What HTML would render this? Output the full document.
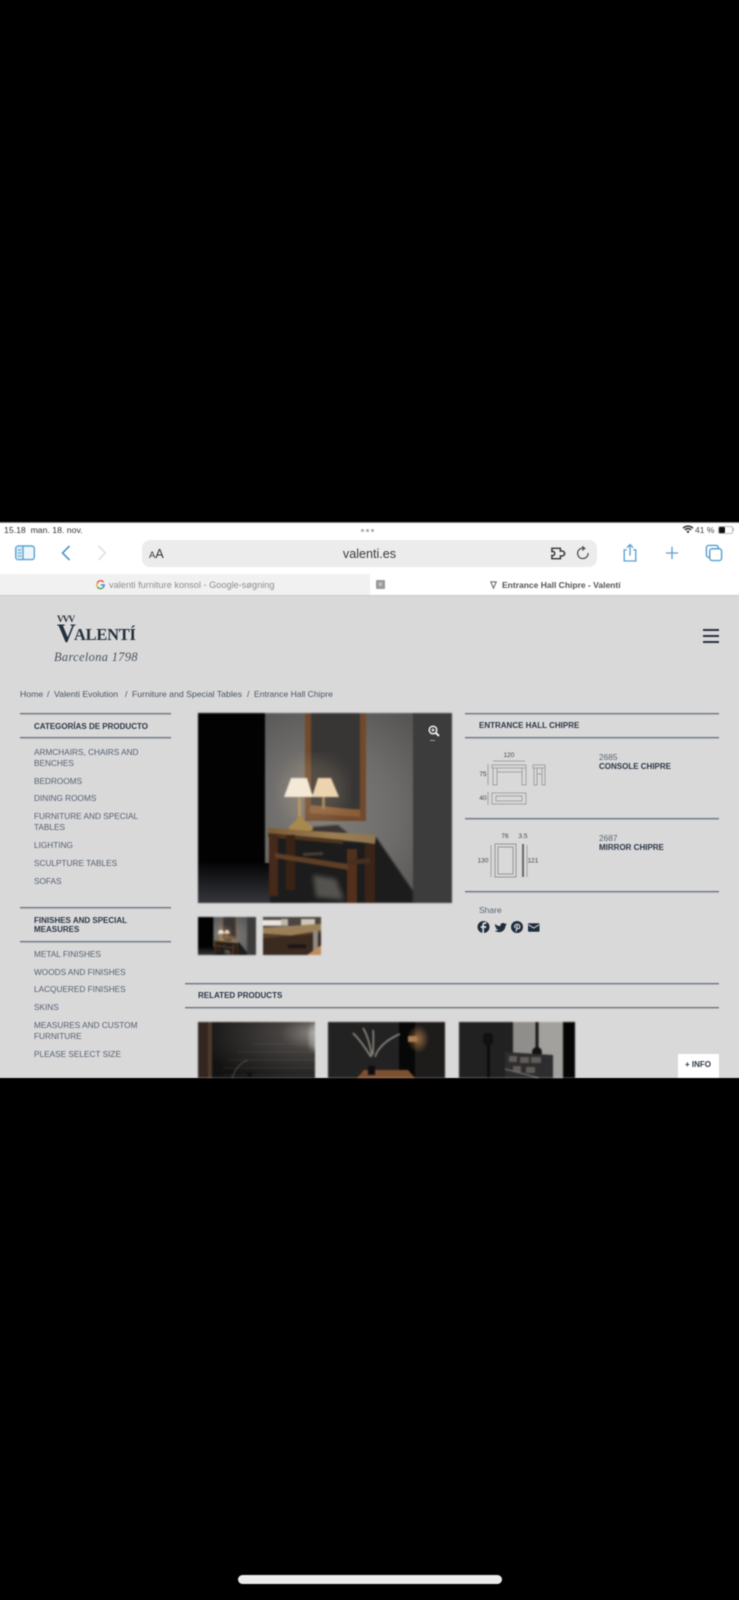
<!DOCTYPE html>
<html lang="en">
<head>
<meta charset="utf-8">
<title>Entrance Hall Chipre - Valentí</title>
<style>
html,body{margin:0;padding:0;background:#000;}
body{width:739px;height:1600px;position:relative;overflow:hidden;font-family:"Liberation Sans",sans-serif;}
.a{position:absolute;}
.t{position:absolute;white-space:nowrap;line-height:12px;height:12px;}
#wrap{position:absolute;left:0;top:0;width:739px;height:1600px;filter:blur(.45px);}
.r{position:absolute;height:1px;background:#626b78;box-shadow:0 1px 0 #b4b8bd;}
.n{font-size:8.25px;color:#556070;left:34px;}
.h{font-size:8px;font-weight:bold;color:#2c3746;}
.bc{font-size:8.7px;color:#4b5563;top:688px;}
svg{position:absolute;overflow:visible;}
.ph{filter:blur(.7px);overflow:hidden;}
</style>
</head>
<body>
<div id="wrap">
<svg width="0" height="0" style="position:absolute">
<defs>
<filter id="b1"><feGaussianBlur stdDeviation="0.7"/></filter>
<filter id="b2"><feGaussianBlur stdDeviation="2.5"/></filter>
<filter id="b3"><feGaussianBlur stdDeviation="8"/></filter>
<radialGradient id="wall" gradientUnits="userSpaceOnUse" cx="130" cy="100" r="125">
<stop offset="0" stop-color="#7f7d7a"/><stop offset=".55" stop-color="#6e6c6a"/><stop offset="1" stop-color="#565553"/>
</radialGradient>
<linearGradient id="floor" x1="0" y1="0" x2="0" y2="1">
<stop offset="0" stop-color="#050506"/><stop offset="1" stop-color="#35373c"/>
</linearGradient>
<linearGradient id="top" x1="0" y1="0" x2="1" y2="0">
<stop offset="0" stop-color="#7a5a34"/><stop offset=".6" stop-color="#9c7e52"/><stop offset="1" stop-color="#8f7450"/>
</linearGradient>
<radialGradient id="brick" cx="1" cy="0.2" r="1">
<stop offset="0" stop-color="#8b8784"/><stop offset=".3" stop-color="#454240"/><stop offset="1" stop-color="#131212"/>
</radialGradient>
<radialGradient id="glow" cx=".5" cy=".5" r=".5">
<stop offset="0" stop-color="#c98c52"/><stop offset="1" stop-color="#c98c52" stop-opacity="0"/>
</radialGradient>
<symbol id="room" viewBox="0 0 254 190" preserveAspectRatio="none">
<rect width="254" height="190" fill="#020202"/>
<rect x="67" width="187" height="190" fill="url(#wall)"/>
<rect x="215" width="39" height="190" fill="#3d3c3c"/>
<rect x="0" y="150" width="110" height="40" fill="url(#floor)"/>
<rect x="0" y="0" width="66" height="150" fill="#020202"/>
<polygon points="178,124 215,178 215,190 150,190 160,128" fill="#1d1c1c" filter="url(#b1)"/>
<polygon points="72,122 177,130 177,190 72,190" fill="#1f1e1e" filter="url(#b1)"/>
<rect x="107" y="0" width="61" height="108" fill="#714a2e"/>
<rect x="113" y="0" width="49" height="96" fill="#383635"/>
<polygon points="113,92 162,97 162,104 111,100" fill="#8a5e38"/>
<ellipse cx="115" cy="78" rx="32" ry="32" fill="#e8c9a0" opacity=".16" filter="url(#b3)"/>
<polygon points="102,115 140,112 150,120 120,125" fill="#3a3431" filter="url(#b1)"/>
<polygon points="86,84 115,84 109,65 93,65" fill="#f4e9d6"/>
<polygon points="114,84 141,84 133,65 120,65" fill="#eed4ae"/>
<rect x="124" y="84" width="3" height="12" fill="#a88a5c"/>
<rect x="100" y="85" width="3" height="22" fill="#b8975f"/>
<path d="M100 103 C99 110 91 111 91 115 C91 119 96 118 102 118 C110 118 115 119 115 115 C115 111 105 110 104 103Z" fill="#a8894d"/>
<polygon points="70,115 178,122 177,131 145,127 70,120" fill="url(#top)"/>
<polygon points="70,120 145,127 145,131 70,124" fill="#4e341d"/>
<rect x="71" y="121" width="9" height="62" fill="#45291a"/>
<rect x="88" y="122" width="9" height="55" fill="#3a2214"/>
<rect x="149" y="136" width="10" height="54" fill="#52301c"/>
<rect x="167" y="131" width="10" height="59" fill="#3b2417"/>
<polygon points="77,140 150,151 150,157 77,145" fill="#5f3e25"/>
<polygon points="150,147 172,145 172,150 150,152" fill="#45301f"/>
<polygon points="105,140 125,139 125,142 105,143" fill="#4a3c30"/>
<polygon points="115,162 138,166 146,187 118,184" fill="#55534f" filter="url(#b2)"/>
</symbol>
</defs>
</svg>

<!-- Browser chrome -->
<div class="a" style="left:-4px;top:522px;width:747px;height:1px;background:#888;"></div>
<div class="a" style="left:-4px;top:523px;width:747px;height:51px;background:#fff;"></div>
<div class="t" style="left:4px;top:524px;font-size:8.7px;color:#333;">15.18&nbsp; man. 18. nov.</div>
<div class="a" style="left:361px;top:529px;width:3px;height:3px;border-radius:50%;background:#aaa;box-shadow:5px 0 #aaa,10px 0 #aaa;"></div>
<svg style="left:682px;top:525px" width="12" height="9" viewBox="0 0 12 9"><path d="M1 3.2C4 .4 8 .4 11 3.2M2.8 5C4.8 3.2 7.2 3.2 9.2 5" fill="none" stroke="#333" stroke-width="1.5"/><path d="M4.4 6.4 6 8.4 7.6 6.4C6.6 5.6 5.4 5.6 4.4 6.4Z" fill="#333"/></svg>
<div class="t" style="left:695px;top:524px;font-size:8.5px;color:#444;">41 %</div>
<div class="a" style="left:718px;top:526px;width:13px;height:6px;border:1px solid #bbb;border-radius:2px;"></div>
<div class="a" style="left:719px;top:527px;width:6px;height:6px;background:#111;border-radius:1px;"></div>
<div class="a" style="left:733px;top:528px;width:1px;height:3px;background:#bbb;"></div>

<svg style="left:14px;top:544px" width="22" height="18" viewBox="0 0 22 18"><rect x="1.7" y="2" width="18.6" height="13.6" rx="2.5" fill="#eef6fb" stroke="#5aa3d4" stroke-width="1.4"/><rect x="2.5" y="2.8" width="6.5" height="12" fill="#d6e8f4"/><path d="M9 2v13.6" stroke="#5aa3d4" stroke-width="1.4"/><path d="M4 6h3M4 9h3M4 12h3" stroke="#5aa3d4"/></svg>
<svg style="left:60px;top:544px" width="12" height="18" viewBox="0 0 12 18"><path d="M9.5 2 2.5 9l7 7" fill="none" stroke="#4d97cc" stroke-width="1.6"/></svg>
<svg style="left:96px;top:544px" width="12" height="18" viewBox="0 0 12 18"><path d="M2.5 2l7 7-7 7" fill="none" stroke="#e2e2e2" stroke-width="1.6"/></svg>

<div class="a" style="left:142px;top:540px;width:455px;height:27px;background:#ececec;border-radius:8px;"></div>
<div class="t" style="left:149px;top:548px;color:#333;font-size:12.5px;"><span style="font-size:9.5px">A</span>A</div>
<div class="t" style="left:0;width:739px;text-align:center;top:548px;font-size:12.6px;color:#3a3a3a;">valenti.es</div>
<svg style="left:550px;top:545px" width="17" height="17" viewBox="0 0 18 18"><path d="M2 3.5H11V6.5C13 5.8 15.5 7 15.5 9S13 12.2 11 11.5V14.5H2V11C4.5 11.5 5 10 5 9S4.5 6.5 2 7Z" fill="none" stroke="#333" stroke-width="1.5"/></svg>
<svg style="left:576px;top:546px" width="14" height="14" viewBox="0 0 16 16"><path d="M9.3 2.6A6 6 0 1 0 13.8 8" fill="none" stroke="#444" stroke-width="1.3"/><path d="M7 .4 10 2.7 7 5" fill="none" stroke="#444" stroke-width="1.3"/></svg>
<svg style="left:622px;top:543px" width="16" height="20" viewBox="0 0 18 22"><path d="M5.5 7.5H2.5V20H15.5V7.5H12.5" fill="none" stroke="#5aa0d0" stroke-width="1.5"/><path d="M9 14V2M5.5 5 9 1.5 12.5 5" fill="none" stroke="#5aa0d0" stroke-width="1.5"/></svg>
<svg style="left:665px;top:546px" width="14" height="14" viewBox="0 0 16 16"><path d="M8 1v14M1 8h14" stroke="#5aa0d0" stroke-width="1.5"/></svg>
<svg style="left:705px;top:544px" width="18" height="18" viewBox="0 0 19 19"><rect x="5" y="5" width="12.5" height="12.5" rx="2.5" fill="#fff" stroke="#5aa0d0" stroke-width="1.5"/><path d="M5 14H3.8A2.3 2.3 0 0 1 1.5 11.7V3.8A2.3 2.3 0 0 1 3.8 1.5H11.7A2.3 2.3 0 0 1 14 3.8V5" fill="none" stroke="#5aa0d0" stroke-width="1.5"/></svg>

<!-- Tabs -->
<div class="a" style="left:-4px;top:574px;width:374px;height:21px;background:#f1f1f1;"></div>
<div class="a" style="left:370px;top:574px;width:373px;height:21px;background:#fff;"></div>
<div class="a" style="left:-4px;top:595px;width:747px;height:1px;background:#c9c9c9;"></div>
<svg style="left:96px;top:580px" width="9" height="10" viewBox="0 0 9 10"><path d="M7.6 2.2A3.6 3.6 0 0 0 1.2 3.4" fill="none" stroke="#e0564a" stroke-width="1.4"/><path d="M1.2 3.4A3.8 3.8 0 0 0 1.4 7" fill="none" stroke="#e8b93c" stroke-width="1.4"/><path d="M1.4 7A3.7 3.7 0 0 0 7 7.6" fill="none" stroke="#4da35c" stroke-width="1.4"/><path d="M7 7.6C8 6.8 8.2 6 8.2 5H4.8" fill="none" stroke="#4a84d8" stroke-width="1.4"/></svg>
<div class="t" style="left:109px;top:579px;font-size:9.2px;color:#8c8c8c;">valenti furniture konsol - Google-søgning</div>
<div class="a" style="left:376px;top:580px;width:9px;height:9px;background:#9a9a9a;border-radius:1px;color:#eee;font-size:8px;line-height:9px;text-align:center;">×</div>
<svg style="left:490px;top:581px" width="7" height="8" viewBox="0 0 9 10"><path d="M1 1H8L4.5 9Z" fill="none" stroke="#666" stroke-width="1.3"/></svg>
<div class="t" style="left:502px;top:579px;font-size:8.5px;font-weight:bold;color:#555;">Entrance Hall Chipre - Valentí</div>

<!-- Page -->
<div class="a" style="left:-4px;top:596px;width:747px;height:482px;background:#d9d9d9;"></div>

<!-- Logo -->
<div class="t" style="left:57px;top:614px;font:bold 9.5px/12px 'Liberation Serif',serif;letter-spacing:-1.2px;color:#2a3240;">VVV</div>
<div class="t" style="left:57px;top:622px;height:24px;line-height:24px;font-family:'Liberation Serif',serif;font-weight:bold;color:#25303e;font-size:26px;">V</div>
<div class="t" style="left:74px;top:625px;height:20px;line-height:20px;font-family:'Liberation Serif',serif;font-weight:bold;color:#25303e;font-size:16.4px;letter-spacing:-.2px;">ALENTÍ</div>
<div class="t" style="left:54px;top:650px;height:14px;line-height:14px;font-family:'Liberation Serif',serif;font-style:italic;color:#4a5360;font-size:12.4px;letter-spacing:.35px;">Barcelona 1798</div>

<!-- Hamburger -->
<div class="a" style="left:703px;top:629px;width:16px;height:2px;background:#2b3442;"></div>
<div class="a" style="left:703px;top:635px;width:16px;height:2px;background:#2b3442;"></div>
<div class="a" style="left:703px;top:641px;width:16px;height:2px;background:#2b3442;"></div>

<!-- Breadcrumb -->
<div class="t bc" style="left:20px;">Home</div>
<div class="t bc" style="left:47px;">/</div>
<div class="t bc" style="left:54px;">Valenti Evolution</div>
<div class="t bc" style="left:125px;">/</div>
<div class="t bc" style="left:132px;">Furniture and Special Tables</div>
<div class="t bc" style="left:247px;">/</div>
<div class="t bc" style="left:254px;font-size:8.55px;">Entrance Hall Chipre</div>

<!-- Sidebar -->
<div class="r" style="left:20px;top:713px;width:151px;"></div>
<div class="t h" style="left:34px;top:720.5px;">CATEGORÍAS DE PRODUCTO</div>
<div class="r" style="left:20px;top:737px;width:151px;"></div>
<div class="t n" style="top:746.5px;">ARMCHAIRS, CHAIRS AND</div>
<div class="t n" style="top:757.5px;">BENCHES</div>
<div class="t n" style="top:775.5px;">BEDROOMS</div>
<div class="t n" style="top:793px;">DINING ROOMS</div>
<div class="t n" style="top:811px;">FURNITURE AND SPECIAL</div>
<div class="t n" style="top:822px;">TABLES</div>
<div class="t n" style="top:839.5px;">LIGHTING</div>
<div class="t n" style="top:857.5px;">SCULPTURE TABLES</div>
<div class="t n" style="top:875.5px;">SOFAS</div>

<div class="r" style="left:20px;top:907px;width:151px;"></div>
<div class="t h" style="left:34px;top:914.5px;">FINISHES AND SPECIAL</div>
<div class="t h" style="left:34px;top:923.5px;">MEASURES</div>
<div class="r" style="left:20px;top:941px;width:151px;"></div>
<div class="t n" style="top:948.5px;">METAL FINISHES</div>
<div class="t n" style="top:966.5px;">WOODS AND FINISHES</div>
<div class="t n" style="top:984px;">LACQUERED FINISHES</div>
<div class="t n" style="top:1001.5px;">SKINS</div>
<div class="t n" style="top:1019.5px;">MEASURES AND CUSTOM</div>
<div class="t n" style="top:1030.5px;">FURNITURE</div>
<div class="t n" style="top:1048.5px;">PLEASE SELECT SIZE</div>

<!-- Main image -->
<svg class="ph" style="left:198px;top:713px" width="254" height="190"><use href="#room" width="254" height="190"/></svg>
<svg style="left:428px;top:725px" width="12" height="12" viewBox="0 0 12 12"><circle cx="5" cy="5" r="3.8" fill="none" stroke="#eee" stroke-width="1.5"/><path d="M8 8l3 3" stroke="#eee" stroke-width="2"/><path d="M3.2 5h3.6M5 3.2v3.6" stroke="#eee"/></svg>
<div class="a" style="left:430px;top:740px;width:5px;height:1px;background:#999;"></div>

<!-- Thumbs -->
<svg class="ph" style="left:198px;top:917px" width="58" height="38"><use href="#room" width="58" height="38"/></svg>
<svg class="ph" style="left:263px;top:917px" width="58" height="38" viewBox="0 0 58 39" preserveAspectRatio="none">
<rect width="58" height="39" fill="#3a2a20"/>
<rect width="58" height="11" fill="#4d4540"/>
<rect x="0" y="3" width="18" height="6" fill="#e8e4df"/>
<rect x="38" y="2" width="14" height="7" fill="#cfc6b8"/>
<rect x="18" y="2" width="7" height="7" fill="#bdb6ac"/>
<polygon points="0,11 58,7 58,14 28,19 0,17" fill="#9a8058"/>
<polygon points="0,17 28,19 58,14 58,17 0,22" fill="#5a3f27"/>
<rect x="50" y="14" width="5" height="25" fill="#8e8b87"/>
<rect x="25" y="28" width="18" height="4" fill="#1d1613"/>
<polygon points="44,39 58,29 58,39" fill="#c08d5e"/>
</svg>

<!-- Right column -->
<div class="r" style="left:465px;top:713px;width:254px;"></div>
<div class="t h" style="left:479px;top:719.5px;">ENTRANCE HALL CHIPRE</div>
<div class="r" style="left:465px;top:737px;width:254px;"></div>

<svg style="left:465px;top:745px" width="100" height="65" viewBox="0 0 100 65">
<g font-family="'Liberation Sans',sans-serif" font-size="6.5" fill="#444" text-anchor="middle">
<text x="44" y="12">120</text>
<text x="18" y="31">75</text>
<text x="18" y="55">40</text>
</g>
<g fill="none" stroke="#a2a2a2" stroke-width="1">
<path d="M28 16H60M23 19V40"/>
<path d="M27 20H61V23H27ZM28 23V40H32V23M57 23V40H61V23M32 27H57"/>
<path d="M68 20H80V23H68ZM69 23V40H72V23M77 23V40H80V23M72 29H77"/>
<path d="M27 48H61V59H27ZM31 51H57V56H31ZM23 47V60"/>
</g>
</svg>
<div class="t" style="left:599px;top:751px;font-size:8.3px;color:#5a6370;">2685</div>
<div class="t h" style="left:599px;top:761px;font-size:8px;">CONSOLE CHIPRE</div>
<div class="r" style="left:465px;top:818px;width:254px;"></div>

<svg style="left:465px;top:825px" width="100" height="62" viewBox="0 0 100 62">
<g font-family="'Liberation Sans',sans-serif" font-size="6.5" fill="#444" text-anchor="middle">
<text x="40" y="13">76</text>
<text x="58" y="13">3.5</text>
<text x="18" y="37.5">130</text>
<text x="68" y="37.5">121</text>
</g>
<g fill="none" stroke="#a2a2a2" stroke-width="1">
<path d="M26 20V52M62 20V52"/>
<path d="M30 19H51V52H30ZM33 22H48V49H33Z" stroke="#969696"/>
<path d="M58 19V52" stroke="#6a6a6a" stroke-width="2"/>
</g>
</svg>
<div class="t" style="left:599px;top:832px;font-size:8.3px;color:#5a6370;">2687</div>
<div class="t h" style="left:599px;top:842px;font-size:8px;">MIRROR CHIPRE</div>
<div class="r" style="left:465px;top:891px;width:254px;"></div>

<div class="t" style="left:479px;top:904px;font-size:8.5px;color:#5a6472;">Share</div>
<svg style="left:478px;top:921px" width="62" height="12" viewBox="0 0 62 12">
<circle cx="5.5" cy="6" r="6" fill="#1f2d3d"/><path d="M6 12V7H8L8.3 5H6V4C6 3.3 6.3 3 7 3H8.400V1.300C7 1 4.300 .8 4.300 3.800V5H2.700V7H4.300V12Z" fill="#d9d9d9"/>
<path d="M17 2.700C18.500 4.200 20 5 22.300 5.100 22 2.700 25 1 26.800 2.800L28.500 2.300 27.600 3.800 28.800 3.500C28.300 4.200 27.900 4.700 27.400 5.100 27.400 9.500 22 13.300 16.500 9.800 18 9.900 19.300 9.600 20.400 8.800 19 8.700 18.100 7.800 17.700 6.800L19 6.700C17.500 6.300 16.800 5.200 16.800 4.200L18 4.500C17 3.700 16.700 3 17 2.700Z" fill="#1f2d3d"/>
<circle cx="39" cy="6" r="6" fill="#1f2d3d"/><path d="M38 10.500 39.300 4.300M37 7C35.800 4.500 38 2.800 40 3.300 42.500 4 42.300 7.800 39.800 7.800 39 7.800 38.700 7.300 38.600 6.800" fill="none" stroke="#d9d9d9" stroke-width="1.200"/>
<rect x="50" y="2.200" width="11.500" height="8.500" rx="1" fill="#1f2d3d"/><path d="M50.500 3.800 55.700 7 61 3.800" fill="none" stroke="#d9d9d9" stroke-width="1"/>
</svg>

<!-- Related -->
<div class="r" style="left:185px;top:983px;width:534px;"></div>
<div class="t h" style="left:198px;top:990px;">RELATED PRODUCTS</div>
<div class="r" style="left:185px;top:1007px;width:534px;"></div>

<svg class="ph" style="left:198px;top:1022px" width="117" height="56" viewBox="0 0 117 56">
<rect width="117" height="56" fill="url(#brick)"/>
<rect x="0" width="14" height="56" fill="#33261f"/>
<rect x="10" width="4" height="56" fill="#4d3a2d"/>
<g stroke="#77726e" stroke-width=".6" opacity=".4"><path d="M55 22H117M40 30H117M30 38H117M25 46H117M25 53H117"/></g>
<ellipse cx="117" cy="15" rx="6" ry="14" fill="#cfcac5" opacity=".5" filter="url(#b2)"/>
<path d="M34 56C38 45 44 40 50 38" stroke="#5c4a3e" fill="none"/>
<rect x="49" y="50" width="5" height="6" fill="#111"/>
</svg>
<svg class="ph" style="left:328px;top:1022px" width="117" height="56" viewBox="0 0 117 56">
<rect width="117" height="56" fill="#232222"/>
<rect x="71" width="16" height="56" fill="#070707"/>
<rect x="87" width="30" height="56" fill="#1e1c1b"/>
<ellipse cx="90" cy="17" rx="11" ry="14" fill="url(#glow)" opacity=".7"/>
<rect x="80" y="14" width="9" height="6" fill="#a87e4e"/>
<g stroke="#a8a198" stroke-width="1.300" fill="none">
<path d="M43 35C37 25 32 18 25 11"/><path d="M44 34C42 24 40 14 35 6"/><path d="M45 32C45 24 46 14 45 8"/><path d="M47 35C50 25 60 17 72 12"/>
</g>
<path d="M44 35V47" stroke="#222"/>
<polygon points="36,48 80,48 87,56 29,56" fill="#7d5030"/>
<rect x="40" y="44" width="7" height="9" fill="#0d0d0d"/>
</svg>
<svg class="ph" style="left:459px;top:1022px" width="116" height="56" viewBox="0 0 116 56">
<rect width="116" height="56" fill="#212122"/>
<rect x="54" width="50" height="56" fill="#8f8e8b"/>
<rect x="80" width="24" height="56" fill="#a2a19d"/>
<rect x="104" width="12" height="56" fill="#050505"/>
<rect x="24" y="11" width="10" height="12" fill="#111" rx="3"/>
<rect x="28" y="23" width="3" height="33" fill="#0c0c0c"/>
<path d="M78 0V28" stroke="#181818" stroke-width="3"/>
<circle cx="78" cy="30" r="5" fill="#111"/>
<polygon points="46,30 94,33 94,56 46,56" fill="#2d2c2e"/>
<g fill="#615c58"><rect x="50" y="34" width="8" height="6"/><rect x="61" y="35" width="9" height="6"/><rect x="72" y="35" width="10" height="6"/><rect x="54" y="44" width="8" height="6"/><rect x="67" y="45" width="9" height="6"/></g>
<path d="M46 47 80 56" stroke="#77746f" stroke-width="1.300"/>
</svg>

<!-- +INFO -->
<div class="a" style="left:678px;top:1054px;width:41px;height:24px;background:#fff;"></div>
<div class="t" style="left:685px;top:1059px;font-size:8px;font-weight:bold;color:#2c3746;">+ INFO</div>

<!-- Home indicator -->
<div class="a" style="left:238px;top:1575px;width:264px;height:9px;background:#ececec;border-radius:5px;"></div>
</div>
</body>
</html>
